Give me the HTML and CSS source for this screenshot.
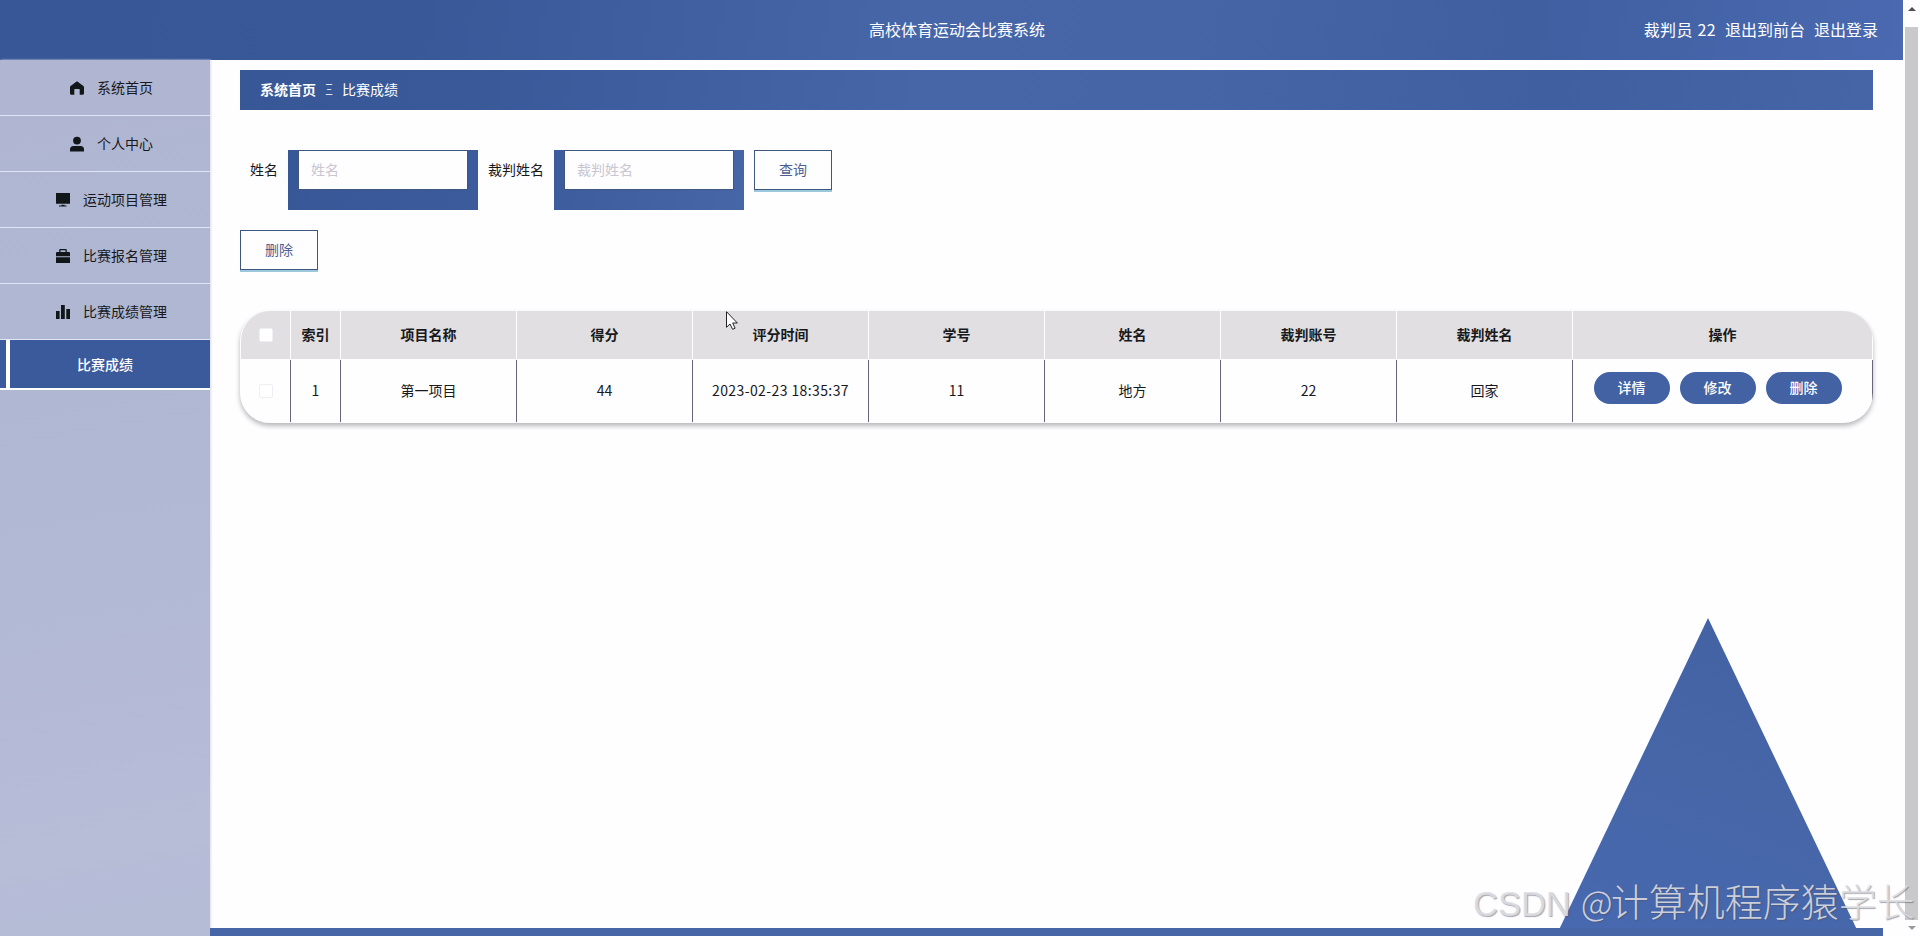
FILE: index.html
```html
<!DOCTYPE html>
<html lang="zh-CN">
    <head>
        <meta charset="utf-8">
        <title>高校体育运动会比赛系统</title>
        <link rel="stylesheet" href="styles.css">
    </head>
    <body>
        <div class="page">
            <header class="navbar">
                <div class="title">高校体育运动会比赛系统</div>
                <div class="user">
                    <span class="username">裁判员 22</span>
                    <span class="tofront">退出到前台</span>
                    <span class="logout">退出登录</span>
                </div>
            </header>
            <div class="container">
                <nav class="sidebar">
                    <div class="menu">
                        <svg class="icon" viewBox="0 0 14 14"><path d="M7 0.3L0.6 5Q0 5.5 0 6.3V12.6Q0 13.7 1 13.7H4.3V8.6Q4.3 8 5 8H9Q9.7 8 9.7 8.6V13.7H13Q14 13.7 14 12.6V6.3Q14 5.5 13.4 5Z"/></svg>
                        <span>系统首页</span>
                    </div>
                    <div class="menu">
                        <svg class="icon" viewBox="0 0 14 14"><circle cx="7" cy="3.6" r="3.9"/><path d="M0 14.5V12.5Q0 9 3.5 9H10.5Q14 9 14 12.5V14.5Z"/></svg>
                        <span>个人中心</span>
                    </div>
                    <div class="menu">
                        <svg class="icon" viewBox="0 0 14 14"><path d="M0 0H14V10.7H0ZM5.5 11.7H8.5V12.6H10.5V13.6H3V12.6H5.5Z"/></svg>
                        <span>运动项目管理</span>
                    </div>
                    <div class="menu">
                        <svg class="icon" viewBox="0 0 14 14"><path d="M0 7.2V4Q0 3 1 3H3.2V1Q3.2 0 4.2 0H9.8Q10.8 0 10.8 1V3H13Q14 3 14 4V7.2ZM4.5 3H9.5V1.2H4.5ZM0 8.2H14V14H0Z" fill-rule="evenodd"/></svg>
                        <span>比赛报名管理</span>
                    </div>
                    <div class="menu">
                        <svg class="icon" viewBox="0 0 14 14"><path d="M0 6H3.6V14H0ZM5 0H8.8V14H5ZM10.3 4H14V14H10.3Z"/></svg>
                        <span>比赛成绩管理</span>
                    </div>
                    <div class="submenu">比赛成绩</div>
                </nav>
                <main class="main">
                    <div class="breadcrumb">
                        <b>系统首页</b>
                        <span class="separator">Ξ</span>
                        <span>比赛成绩</span>
                    </div>
                    <div class="search">
                        <label>姓名</label>
                        <div class="inputbox"><input type="text" placeholder="姓名"></div>
                        <label>裁判姓名</label>
                        <div class="inputbox inputbox2"><input type="text" placeholder="裁判姓名"></div>
                        <button class="button">查询</button>
                    </div>
                    <button class="button delete">删除</button>
                    <div class="table">
                        <div class="row head">
                            <div class="check"><i class="checkbox"></i></div>
                            <div>索引</div>
                            <div>项目名称</div>
                            <div>得分</div>
                            <div>评分时间</div>
                            <div>学号</div>
                            <div>姓名</div>
                            <div>裁判账号</div>
                            <div>裁判姓名</div>
                            <div>操作</div>
                        </div>
                        <div class="row data">
                            <div class="check"><i class="checkbox"></i></div>
                            <div>1</div>
                            <div>第一项目</div>
                            <div>44</div>
                            <div class="time">2023-02-23 18:35:37</div>
                            <div>11</div>
                            <div>地方</div>
                            <div>22</div>
                            <div>回家</div>
                            <div class="actions">
                                <button>详情</button>
                                <button>修改</button>
                                <button>删除</button>
                            </div>
                        </div>
                    </div>
                </main>
            </div>
        </div>
        <!-- decoration at the bottom of the page -->
        <div class="triangle"></div>
        <div class="bottombar"></div>
        <div class="scrollbar">
            <i class="arrowup"></i>
            <div class="thumb"></div>
            <i class="arrowdown"></i>
        </div>
        <div class="watermark"><span class="site">CSDN</span> <span class="author"><span class="at">@</span>计算机程序猿学长</span></div>
        <svg class="cursor" viewBox="0 0 12 19"><path d="M0.5 0.7V16.3L4 13L6.6 18.3L9.1 17.2L6.7 12H11.4Z"/></svg>
    </body>
</html>
```
FILE: styles.css
```css
* {
    box-sizing: border-box;
}
body {
    margin: 0;
    width: 1920px;
    height: 936px;
    overflow: hidden;
    position: relative;
    background-color: #fefdff;
    color: #18191c;
    font-family: "Noto Sans CJK SC", sans-serif;
    font-size: 14px;
    line-height: 20px;
}
.page {
    width: 1903px;
    height: 936px;
    display: flex;
    flex-direction: column;
}
.navbar {
    height: 60px;
    display: grid;
    grid-template-columns: 1fr auto 1fr;
    align-items: center;
    padding: 0 25px 2px 36px;
    background: linear-gradient(100deg, #375797 0%, #385898 22%, #4666a8 48%, #4565a7 62%, #3f5fa1 80%, #4a69b0 100%);
    color: white;
    font-size: 16px;
}
.title {
    grid-column: 2;
}
.user {
    display: flex;
    justify-content: flex-end;
    gap: 9px;
    white-space: nowrap;
}
.username {
    letter-spacing: 0.3px;
    word-spacing: 1px;
}
.container {
    flex: 1;
    display: flex;
}
.sidebar {
    width: 210px;
    background: linear-gradient(170deg, #b0b6d2 0%, #afb7d2 35%, #b2b9d5 60%, #b7bcd7 88%, #b4bcd6 100%);
    box-shadow: 1px 0 2px #dddbe8;
}
.menu {
    height: 56px;
    display: flex;
    align-items: center;
    justify-content: center;
    gap: 13px;
    padding-left: 13px;
    border-bottom: 1px solid #e0e4f7;
}
.menu span {
    padding-bottom: 2px;
}
.icon {
    width: 14px;
    height: 14px;
    fill: #111719;
    overflow: visible;
}
.submenu {
    height: 50px;
    display: flex;
    align-items: center;
    justify-content: center;
    border-bottom: 2px solid white;
    background: linear-gradient(to right, #3a5a9b 6px, white 6px, white 10px, #3a5a9b 10px);
    color: white;
    font-weight: 500;
}
.main {
    flex: 1;
    padding: 10px 30px;
}
.breadcrumb {
    height: 40px;
    display: flex;
    align-items: center;
    padding: 0 0 2px 20px;
    background: linear-gradient(100deg, #375797 0%, #395999 15%, #4666a8 42%, #4565a7 58%, #3f5fa1 80%, #4565a7 100%);
    color: white;
}
.separator {
    width: 26px;
    text-align: center;
    font-weight: 300;
}
.search {
    height: 60px;
    margin-top: 40px;
    display: flex;
}
.search label {
    padding: 0 10px;
    line-height: 38px;
}
.inputbox {
    width: 190px;
    height: 60px;
    padding: 0 10px;
    background: linear-gradient(100deg, #375797, #3b5b9c);
}
.inputbox2 {
    background: linear-gradient(100deg, #3c5c9d, #4666a8);
}
.inputbox input {
    display: block;
    width: 170px;
    height: 40px;
    padding: 0 12px 2px;
    border: 1px solid #40577d;
    background-color: #fefdff;
    font: inherit;
}
.inputbox input::placeholder {
    color: #c9c6d0;
}
.button {
    width: 78px;
    height: 40px;
    padding: 0 0 2px;
    border: 1px solid #40577d;
    background-color: #fefdff;
    box-shadow: 0 2px 0 #9bc8dc;
    color: #4f5d91;
    font: inherit;
}
.search .button {
    margin-left: 10px;
}
.delete {
    display: block;
    margin-top: 20px;
}
.table {
    height: 112px;
    margin-top: 41px;
    border-left: 1px solid #fefdff;
    border-radius: 30px;
    overflow: hidden;
    box-shadow: 0 3px 5px rgba(0,0,0,0.28);
    background-color: #fefdff;
}
.row {
    display: grid;
    grid-template-columns: 50px 50px repeat(7, 176px) 300px;
}
.row > div {
    display: flex;
    align-items: center;
    justify-content: center;
    padding-bottom: 2px;
    border-right: 1px solid #68667a;
}
.row > .check {
    padding-bottom: 0;
}
.head {
    height: 49px;
    background-color: #e1dfe2;
    border-bottom: 1px solid #fefdff;
    font-weight: bold;
}
.row.head > div {
    border-color: #fefdff;
}
.data {
    height: 62px;
}
.time {
    letter-spacing: 0.4px;
}
.checkbox {
    width: 14px;
    height: 14px;
    border: 1px solid #f0eef2;
    border-radius: 2px;
    background-color: white;
}
.row .actions {
    align-items: flex-start;
    gap: 10px;
    padding: 12px 10px 0 0;
}
.actions button {
    width: 76px;
    height: 32px;
    padding: 0 0 2px;
    border: 0;
    border-radius: 16px;
    background-color: #4262a4;
    color: white;
    font: inherit;
    font-weight: 500;
}
.triangle {
    position: absolute;
    left: 1556px;
    top: 618px;
    width: 304px;
    height: 318px;
    clip-path: polygon(50% 0, 100% 100%, 0 100%);
    background: linear-gradient(200deg, #4161a2, #4666a8 50%, #4868b0);
}
.bottombar {
    position: absolute;
    left: 210px;
    bottom: 0;
    width: 1673px;
    height: 8px;
    background-color: #4666a8;
}
.scrollbar {
    position: absolute;
    top: 0;
    right: 0;
    width: 17px;
    height: 936px;
    display: flex;
    flex-direction: column;
    align-items: center;
    background-color: #fefdff;
}
.thumb {
    width: 13px;
    height: 893px;
    margin: 16px 0 6px;
    background-color: #c9c8ca;
}
.arrowup {
    margin-top: 7px;
    border: 4px solid transparent;
    border-top: 0;
    border-bottom-color: #505050;
}
.arrowdown {
    border: 4px solid transparent;
    border-bottom: 0;
    border-top-color: #9a999c;
}
.watermark {
    position: absolute;
    left: 1473px;
    top: 872px;
    display: flex;
    align-items: baseline;
    gap: 10px;
    color: rgba(222,223,228,0.88);
    font-size: 38px;
    font-weight: 300;
    line-height: 56px;
    white-space: nowrap;
    text-shadow: 1px 1px 1px rgba(80,80,90,0.5);
}
.site {
    font-family: "Liberation Sans", sans-serif;
    font-size: 34.5px;
}
.at {
    font-size: 35px;
    letter-spacing: -2px;
}
.cursor {
    position: absolute;
    left: 726px;
    top: 311px;
    width: 12px;
    height: 19px;
    fill: white;
    stroke: #222;
}
```
